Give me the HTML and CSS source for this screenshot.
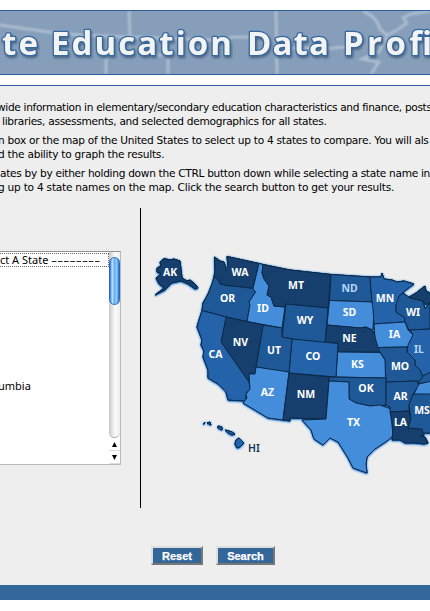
FILE: index.html
```
<!DOCTYPE html>
<html lang="en">
<head>
<meta charset="utf-8">
<title>State Education Data Profiles</title>
<link rel="stylesheet" href="styles.css">
</head>
<body>
<header class="banner">
<svg class="banner-art" width="430" height="63" viewBox="0 11 430 63">
<defs><filter id="soft" x="-10%" y="-20%" width="120%" height="140%"><feGaussianBlur stdDeviation="1"/></filter></defs>
<g class="outlines" filter="url(#soft)">
<path d="M0 25L28 29L55 33L80 35L130 37L215 40L235 37H252M129 11L130 37M106 54V74M150 54L168 56V74M276 11L277 74M285 48L320 49L334 48L365 45M363 11Q378 18 380 29L387 35L379 52L362 59L379 62L371 74M387 35L397 30L407 23L403 18L411 14L430 11"/>
</g>
<g class="title">
<text x="2" y="55" textLength="36">te</text>
<text x="51" y="55" textLength="181">Education</text>
<text x="247" y="55" textLength="82">Data</text>
<text x="343" y="55" textLength="89">Profi</text>
</g>
</svg>
</header>
<main class="content">
<section class="intro">
<p><span class="l1">wide information in elementary/secondary education characteristics and finance, posts</span><span class="l2">libraries, assessments, and selected demographics for all states.</span></p>
<p><span class="l3">n box or the map of the United States to select up to 4 states to compare. You will als</span><span class="l4">d the ability to graph the results.</span></p>
<p><span class="l5">ates by by either holding down the CTRL button down while selecting a state name in</span><span class="l6">g up to 4 state names on the map. Click the search button to get your results.</span></p>
</section>
<section class="picker">
<div class="list-pane">
<div class="listbox">
<div class="options"><div class="option chosen">ct A State <span class="dashes">--------</span></div><div class="option columbia">umbia</div></div>
<div class="scrollbar"><div class="track"><div class="thumb"></div></div><div class="arrow"><svg width="5" height="5"><path d="M2.5 0L5 5H0z"/></svg></div><div class="arrow"><svg width="5" height="5"><path d="M0 0H5L2.5 5z"/></svg></div></div>
</div>
</div>
<div class="map-pane">
<svg class="map" width="280" height="240" viewBox="150 245 280 240">
<g id="shapes">
<path class="a" d="M214.500 257L220 261L224 262L226 268L228 266L227 256.500L259 263.500L253 288.500L237 286.500L226 285.500L220 284L218 279L214 277L215 270Z"/>
<path class="b" d="M214 277L218 279L220 284L226 285.500L237 286.500L253 288.500L255.500 292L249 302L250 305L247 321.500L226 317L202 310.500L203 303L208 294L212 284Z"/>
<path class="d" d="M259 263.500L263 264.500L262 273L264 279L269 286L267 295L271 297L274 306L285 307L282 328L247 321.500L250 305L249 302L255.500 292L253 288.500Z"/>
<path class="a" d="M263 264.500L290 270L331 274.500L328 308L286 304L285 307L274 306L271 297L267 295L269 286L264 279L262 273Z"/>
<path class="b" d="M286 304L328 308L325 343L292 339L282 337Z"/>
<path class="b" d="M331 274.500L370 277L371 290L372 302L329.500 300.500Z"/>
<path class="d" d="M329.500 300.500L372 302L374 307L373 330L366 327L360 328L327 325Z"/>
<path class="a" d="M327 325L360 328L366 327L373 331L375 337L380 352H337.500L338 343.500L325 343Z"/>
<path class="c" d="M370 277L381 277L382 273L384 279L392 280L397 282L404 281L414 284L406 290L399 296L398 303L396 305V312L405 318V322L374 324L373 309L372 302Z"/>
<path class="d" d="M374 324L405 322L408 330L413 335L408 347L378 347.500L375 337Z"/>
<path class="b" d="M399 296L403 293L410 298L423 301L425 309L430 303V329L409 330L405 322V318L396 312V305Z"/>
<path class="a" d="M409 297L416 293L421 289L425 286L426 291L432 294V301L426 305L423 301Z"/>
<path class="c" d="M410 330L432 329V372L423 377L420 370L415 365V360L407 352L408 345L413 335Z"/>
<path class="b" d="M378 347.500L407 347V352L415 360V365L420 370L423 377L418 385V381L386 382L385 360L380 352Z"/>
<path class="d" d="M337.500 352L380 352.500L385 360L385.500 378L336 377Z"/>
<path class="c" d="M292 339L338 343.500L336 377L289 373Z"/>
<path class="b" d="M263 325L282 328V337L292 339L289 373L256 367Z"/>
<path class="a" d="M226 317L263 325L256 367L255 374L250 373L249 382L221 342Z"/>
<path class="c" d="M202 310.500L226 317L221 342L249 382L250 389L247 392L245 401L228 400L226 392L218 384L208 378V370L203 357L204 351L201 345L202 340L197 327L199 320Z"/>
<path class="d" d="M256 367L289 372L283 420L268 418L243 403L247 398L246 394L250 389L249 374L255 374Z"/>
<path class="a" d="M289 373L329 377L326 419L290 418V421L283 420Z"/>
<path class="b" d="M329 377L386 378V405L380 406L370 406L356 403L349 399V382L329 381Z"/>
<path class="d" d="M329 381L349 382V399L356 403L370 406L380 405L391 409L392 425L393 436L387 441L375 449L367 457L366 464L367 473L353 468L348 458L338 442L330 438L323 445L314 439L311 430L302 420L326 419Z"/>
<path class="b" d="M386 382L417 381L419 386L413 394L409 405V411L390 412V407L386 405Z"/>
<path class="a" d="M390 412L409 411L411 419L408 428L422 429L424 435L420 436L425 437L428 443L424 444L415 443L405 443L400 440L392 440L393 428Z"/>
<path class="b" d="M413 394L432 393V433L423 433L422 429L408 428L411 419L409 405Z"/>
<path class="d" d="M419 384L432 380V394L414 394Z"/>
<path class="b" d="M418 384L423 376L432 371V381Z"/>
<path class="a" d="M157 268L161 266L160 262L164 258.500L170 260L174 259L180 261L182 278L187 281L190 280L195 284L198 288L195 289L188 284L181 281L172 283L165 290L155 295L164 288L159 284L156 278L161 274L157 272Z"/>
<path class="c" d="M236 440L239 438L244 443L240 447L237 448L235 444ZM218 426L222 427L222 430L218 428ZM225 430L229 431L232 432L235 434L232 435L228 433ZM207 423L210 422L211 425ZM203 424L205 422L204 424Z"/>
</g>
<use href="#shapes" class="halo"/>
<use href="#shapes"/>
<g class="labels">
<text x="170" y="276">AK</text><text x="240" y="276">WA</text><text x="227.500" y="302">OR</text><text x="263" y="312">ID</text><text x="296" y="289">MT</text><text x="349.500" y="292" class="pale">ND</text><text x="349.500" y="316">SD</text><text x="385" y="302">MN</text><text x="413" y="316">WI</text><text x="305" y="324">WY</text><text x="240.500" y="346">NV</text><text x="215.500" y="358">CA</text><text x="274" y="354">UT</text><text x="313" y="359.500">CO</text><text x="349.500" y="342">NE</text><text x="394.500" y="338">IA</text><text x="419" y="353" class="pale">IL</text><text x="357.500" y="368">KS</text><text x="400" y="369.500">MO</text><text x="366" y="392">OK</text><text x="267.500" y="395.500">AZ</text><text x="306" y="398">NM</text><text x="400.500" y="399.500">AR</text><text x="422" y="414">MS</text><text x="353.500" y="425.500">TX</text><text x="400.500" y="425.500">LA</text><text x="254" y="452" class="ink">HI</text>
</g>
</svg>
</div>
</section>
<div class="actions"><button class="reset">Reset</button><button class="search">Search</button></div>
</main>
<footer class="footer"></footer>
</body>
</html>
```

FILE: styles.css
```
* { box-sizing: border-box; }
body { margin: 0; width: 430px; height: 611px; overflow: hidden; background: #fff; color: #000; font-family: "DejaVu Sans", sans-serif; }
.banner { height: 65px; margin-top: 10px; border-top: 1px solid #2c62a1; border-bottom: 1px solid #2c62a1; background: #869eb9; overflow: hidden; }
.banner-art { display: block; }
.outlines { fill: none; stroke: #b3c2d4; stroke-width: 2.5; }
.title { font: 700 33px "Open Sans", sans-serif; fill: #f3f3f3; stroke: #34689f; stroke-width: 2.5px; paint-order: stroke; stroke-linejoin: round; filter: drop-shadow(1px 2px 1px #4b6889); }
.content { height: 500px; margin-top: 10px; border-top: 1px solid #2c62a1; background: #eee; overflow: hidden; }
.intro { height: 122px; padding-top: 14px; font-size: 10.6px; line-height: 14px; }
.intro p { margin: 0 0 5px; }
.intro span { display: block; white-space: nowrap; }
.l1 { margin-left: -3px; letter-spacing: -.33px; }
.l2 { margin-left: 2px; letter-spacing: -.3px; }
.l3, .l4, .l5, .l6 { margin-left: -2px; letter-spacing: -.24px; }
.l3 { letter-spacing: -.27px; }
.l5 { margin-left: 0; letter-spacing: -.3px; }
.picker { display: flex; height: 300px; }
.list-pane { width: 141px; padding-top: 43px; border-right: 1px solid #000; }
.listbox { display: flex; width: 121px; height: 214px; background: #fff; border-top: 1px solid #929292; border-right: 1px solid #bbb; border-bottom: 1px solid #bbb; }
.options { width: 109px; padding-top: 1px; font: 11px/14px "Noto Sans", sans-serif; white-space: nowrap; }
.chosen { height: 14px; line-height: 11px; border: 1px dotted #666; border-left: 0; }
.dashes { display: inline-block; letter-spacing: .05px; transform: scaleX(1.72); transform-origin: left; }
.columbia { margin-top: 112px; margin-left: -2px; }
.scrollbar { width: 11px; display: flex; flex-direction: column; background: #fff; }
.track { height: 186px; padding-top: 5px; background: linear-gradient(90deg, #c8c8c8, #fafafa 55%, #eee); border-radius: 0 0 6px 6px; border-bottom: 1px solid #aaa; }
.thumb { height: 48px; border-radius: 6px; border: 1px solid #2864b8; background: linear-gradient(90deg, #2879d9 0%, #c2e2ff 25%, #62b0f2 50%, #92d1ff 75%, #206bce 100%); }
.arrow { height: 13px; display: flex; align-items: center; justify-content: center; border-bottom: 1px solid #ddd; }
.map-pane { padding: 37px 0 0 9px; }
.map { display: block; }
#shapes { stroke: #0b2a4b; stroke-width: 1; stroke-linejoin: round; }
.a { fill: #163f6d; }
.b { fill: #1f5896; }
.c { fill: #2463aa; }
.d { fill: #438ddb; }
.halo { filter: drop-shadow(0 0 1px #418ddd) drop-shadow(0 1px 0 #5b9fe2); }
.labels { font: 700 10.5px "Noto Sans", sans-serif; fill: #fff; text-anchor: middle; }
.labels .pale { fill: #b6d6f7; }
.labels .ink { fill: #143557; font-weight: 600; }
.actions { display: flex; gap: 13px; padding: 38px 0 0 151px; }
button { height: 19px; padding: 0; border: 2px solid; border-color: #ddd #777 #777 #ddd; background: #336799; color: #fff; font: bold 11px "Liberation Sans", sans-serif; -webkit-text-stroke: .25px #fff; }
.reset { width: 52px; }
.search { width: 59px; }
.footer { height: 15px; background: #336799; }
```
